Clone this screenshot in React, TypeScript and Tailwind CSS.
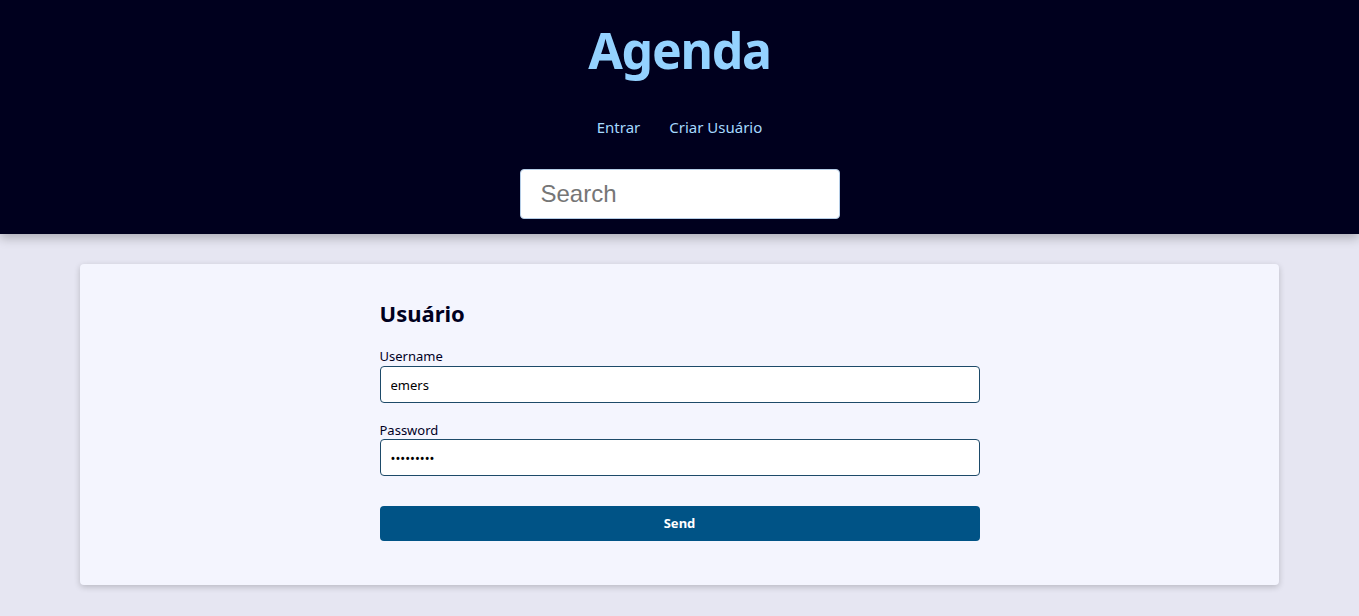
export default function App() {
  return (
    <div className="min-h-screen bg-[#e6e6f2] font-['Noto_Sans',sans-serif]">
      {/* Header */}
      <header className="bg-[#00001e] shadow-[0_4px_10px_rgba(0,0,0,0.25)] flex flex-col items-center pt-[18px] pb-[15px]">
        <h1 className="text-[50px] font-bold text-[#94d2ff] leading-[64px] tracking-tight">Agenda</h1>
        <nav className="flex gap-[29px] mt-[35px] text-[15px] text-[#a6d9ff] leading-[20px]">
          <a href="#">Entrar</a>
          <a href="#">Criar Usuário</a>
        </nav>
        <input
          type="text"
          placeholder="Search"
          className="mt-[32px] w-[320px] h-[50px] rounded-[4px] bg-white border border-[#b5cde6] px-[20px] text-[24px] font-['Liberation_Sans',sans-serif] placeholder:text-[#767676] outline-none"
        />
      </header>

      {/* Main */}
      <main className="px-[80px] pt-[30px]">
        <div className="bg-[#f4f5fe] rounded-[4px] shadow-[0_2px_6px_rgba(0,0,0,0.2)] pt-[34px] pb-[44px] flex justify-center">
          <form className="w-[600px] flex flex-col" onSubmit={(e) => e.preventDefault()}>
            <h2 className="text-[22px] font-bold text-[#00001e] leading-[30px]">Usuário</h2>
            <label className="mt-[19px] text-[13px] text-[#00001e] leading-[19px]">Username</label>
            <input
              type="text"
              defaultValue="emers"
              className="h-[37px] rounded-[4px] border border-[#1d4a69] bg-white px-[10px] text-[13px] text-black outline-none font-['Noto_Sans',sans-serif]"
            />
            <label className="mt-[18px] text-[13px] text-[#00001e] leading-[18px]">Password</label>
            <input
              type="password"
              defaultValue="emerson12"
              className="h-[37px] rounded-[4px] border border-[#1d4a69] bg-white px-[10px] text-[13px] text-black outline-none"
            />
            <button
              type="submit"
              className="mt-[30px] h-[35px] rounded-[4px] bg-[#005386] text-white text-[13px] font-bold"
            >
              Send
            </button>
          </form>
        </div>
      </main>
    </div>
  )
}
